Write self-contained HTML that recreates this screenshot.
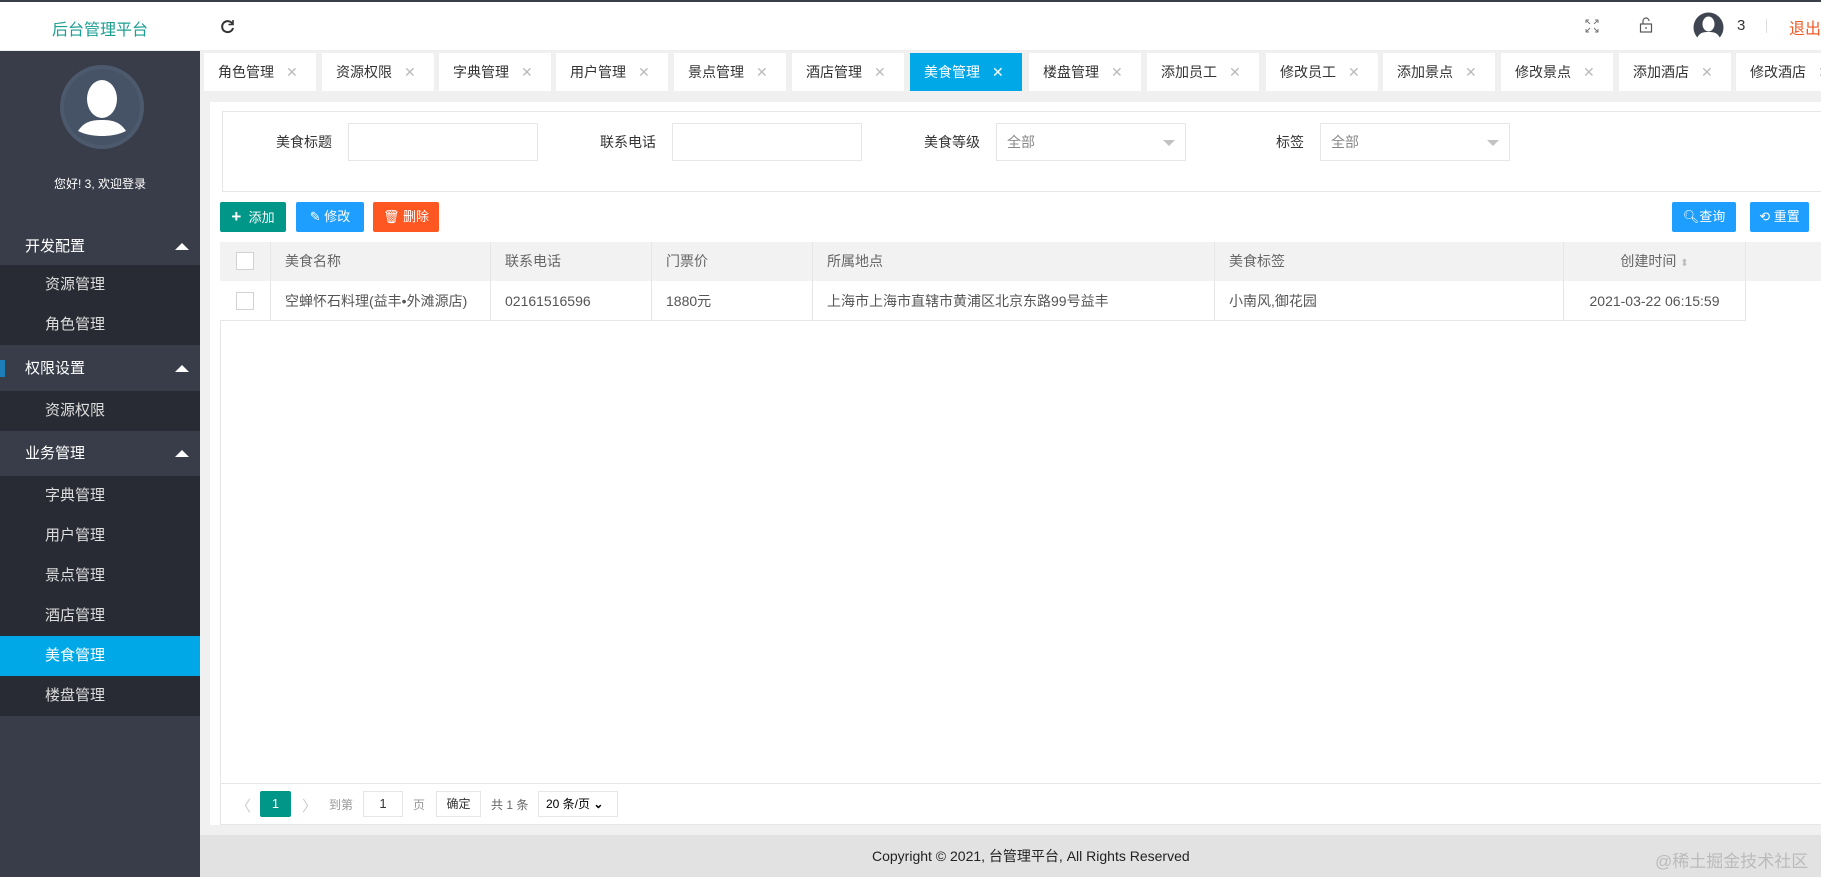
<!DOCTYPE html>
<html><head><meta charset="utf-8"><style>
*{margin:0;padding:0;box-sizing:border-box}
body{width:1821px;height:877px;overflow:hidden;font-family:"Liberation Sans","Noto Sans CJK SC",sans-serif;font-size:14px;color:#333;background:#f0f0f0;position:relative}
.abs{position:absolute}
#hdr{left:0;top:0;width:1821px;height:51px;background:#fff;border-top:2px solid #3a3f4a;border-bottom:1px solid #eee}
#side{left:0;top:51px;width:200px;height:826px;background:#393d49}
.grp{position:absolute;left:0;width:200px;height:45px;background:#393d49;color:#fff;font-size:15px;line-height:45px;padding-left:25px}
.grp:after{content:"";position:absolute;right:11px;top:19px;border-left:7px solid transparent;border-right:7px solid transparent;border-bottom:7px solid #fff}
.it{position:absolute;left:0;width:200px;height:40px;background:#282b33;color:#ddd;font-size:15px;line-height:40px;padding-left:45px}
.tab{position:absolute;top:53px;height:38px;width:112px;background:#fff;font-size:14px;line-height:38px;padding-left:14px;color:#333}
.tab span{color:#bbb;margin-left:12px;font-size:14px}
.lbl{position:absolute;top:132px;font-size:14px;color:#333}
.inp{position:absolute;top:123px;height:38px;width:190px;border:1px solid #e6e6e6;background:#fff;font-size:14px;color:#888;line-height:36px;padding-left:10px}
.sel:after{content:"";position:absolute;right:10px;top:16px;border-left:6px solid transparent;border-right:6px solid transparent;border-top:6px solid #c2c2c2}
.btn{position:absolute;top:202px;height:30px;color:#fff;font-size:13px;line-height:30px;text-align:center;border-radius:2px}
.th,.td{position:absolute;font-size:14px;padding-left:14px;border-right:1px solid #e6e6e6}
.th{top:242px;height:39px;line-height:39px;color:#666;background:#f2f2f2}
.td{top:281px;height:40px;line-height:40px;color:#555;background:#fff;border-bottom:1px solid #e6e6e6}
.cb{position:absolute;width:18px;height:18px;border:1px solid #d2d2d2;background:#fff;left:236px}
</style></head><body>
<div id="hdr" class="abs">
 <div class="abs" style="left:52px;top:14px;font-size:16px;color:#1a9e92">后台管理平台</div>
 <svg class="abs" style="left:220px;top:17px" width="15" height="15" viewBox="0 0 15 15" fill="none" stroke="#333" stroke-width="2"><path d="M12.5 5A5.5 5.5 0 1 0 13 9"/><path d="M13 1v4.5H8.5" stroke-width="1.6"/></svg>
 <svg class="abs" style="left:1585px;top:17px" width="14" height="14" viewBox="0 0 14 14" fill="none" stroke="#777" stroke-width="1"><path d="M1 4V1h3M10 1h3v3M13 10v3h-3M4 13H1v-3M1 1l4 4M13 1 9 5M13 13 9 9M1 13l4-4"/></svg>
 <svg class="abs" style="left:1639px;top:15px" width="14" height="16" viewBox="0 0 14 16" fill="none" stroke="#555" stroke-width="1.2"><path d="M4 7V4a3 3 0 0 1 6 0"/><rect x="1.5" y="7" width="11" height="8"/><path d="M7 10v2"/></svg>
 <svg class="abs" style="left:1693px;top:10px" width="31" height="31" viewBox="0 0 31 31"><circle cx="15.5" cy="15.5" r="15" fill="#3f4651"/><ellipse cx="15.5" cy="12" rx="6" ry="7.5" fill="#fff"/><path d="M4 26c3-6 7-6 11.5-6s8.5 0 11.5 6a14 14 0 0 1-23 0z" fill="#fff"/></svg>
 <div class="abs" style="left:1737px;top:15px;font-size:15px;color:#333">3</div>
 <div class="abs" style="left:1766px;top:17px;width:1px;height:14px;background:#ddd"></div>
 <div class="abs" style="left:1789px;top:13px;font-size:16px;color:#f05a28">退出</div>
</div>
<div id="side" class="abs">
 <svg class="abs" style="left:60px;top:14px" width="84" height="84" viewBox="0 0 84 84"><circle cx="42" cy="42" r="42" fill="#4d5a6e"/><circle cx="42" cy="42" r="38" fill="#465265"/><ellipse cx="42" cy="34" rx="15" ry="19" fill="#fff"/><path d="M18 66c6-9 13-11 24-11s18 2 24 11c-8 4-17 5-24 5s-16-1-24-5z" fill="#fff"/></svg>
 <div class="abs" style="left:0;width:200px;top:124px;text-align:center;color:#fff;font-size:12px">您好! 3, 欢迎登录</div>
</div>
<div class="grp" style="top:224px">开发配置</div>
<div class="it" style="top:265px">资源管理</div>
<div class="it" style="top:305px">角色管理</div>
<div class="grp" style="top:346px"><span class="abs" style="left:0;top:14px;width:5px;height:17px;background:#1e7fb8"></span>权限设置</div>
<div class="it" style="top:391px">资源权限</div>
<div class="grp" style="top:431px">业务管理</div>
<div class="it" style="top:476px">字典管理</div>
<div class="it" style="top:516px">用户管理</div>
<div class="it" style="top:556px">景点管理</div>
<div class="it" style="top:596px">酒店管理</div>
<div class="it" style="top:636px;background:#00a8e8;color:#fff">美食管理</div>
<div class="it" style="top:676px">楼盘管理</div>

<div class="tab" style="left:204px">角色管理<span>✕</span></div>
<div class="tab" style="left:322px">资源权限<span>✕</span></div>
<div class="tab" style="left:439px">字典管理<span>✕</span></div>
<div class="tab" style="left:556px">用户管理<span>✕</span></div>
<div class="tab" style="left:674px">景点管理<span>✕</span></div>
<div class="tab" style="left:792px">酒店管理<span>✕</span></div>
<div class="tab" style="left:910px;background:#00a8e8;color:#fff">美食管理<span style="color:#fff">✕</span></div>
<div class="tab" style="left:1029px">楼盘管理<span>✕</span></div>
<div class="tab" style="left:1147px">添加员工<span>✕</span></div>
<div class="tab" style="left:1266px">修改员工<span>✕</span></div>
<div class="tab" style="left:1383px">添加景点<span>✕</span></div>
<div class="tab" style="left:1501px">修改景点<span>✕</span></div>
<div class="tab" style="left:1619px">添加酒店<span>✕</span></div>
<div class="tab" style="left:1736px">修改酒店<span>✕</span></div>

<div class="abs" style="left:210px;top:102px;width:1611px;height:723px;background:#fff"></div>
<div class="abs" style="left:222px;top:111px;width:1599px;height:81px;border:1px solid #e6e6e6;border-right:none"></div>
<div class="lbl" style="left:276px">美食标题</div><div class="inp" style="left:348px"></div>
<div class="lbl" style="left:600px">联系电话</div><div class="inp" style="left:672px"></div>
<div class="lbl" style="left:924px">美食等级</div><div class="inp sel" style="left:996px">全部</div>
<div class="lbl" style="left:1276px">标签</div><div class="inp sel" style="left:1320px">全部</div>

<div class="btn" style="left:220px;width:66px;background:#009688"><b style="font-size:17px">+</b>&nbsp; 添加</div>
<div class="btn" style="left:296px;width:68px;background:#1e9fff">✎ 修改</div>
<div class="btn" style="left:373px;width:66px;background:#ff5722">🗑 删除</div>
<div class="btn" style="left:1672px;width:64px;background:#1e9fff">&#x1F50D;&#xFE0E;查询</div>
<div class="btn" style="left:1750px;width:59px;background:#1e9fff">⟲ 重置</div>

<div class="abs" style="left:220px;top:242px;width:1601px;height:583px;border:1px solid #e6e6e6;border-right:none"></div>
<div class="th" style="left:220px;width:51px"></div>
<div class="th" style="left:271px;width:220px">美食名称</div>
<div class="th" style="left:491px;width:161px">联系电话</div>
<div class="th" style="left:652px;width:161px">门票价</div>
<div class="th" style="left:813px;width:402px">所属地点</div>
<div class="th" style="left:1215px;width:349px">美食标签</div>
<div class="th" style="left:1564px;width:182px;text-align:center;padding:0">创建时间 <span style="color:#bbb;font-size:10px">⬍</span></div>
<div class="th" style="left:1746px;width:75px;border:none"></div>
<div class="td" style="left:220px;width:51px"></div>
<div class="td" style="left:271px;width:220px">空蝉怀石料理(益丰•外滩源店)</div>
<div class="td" style="left:491px;width:161px">02161516596</div>
<div class="td" style="left:652px;width:161px">1880元</div>
<div class="td" style="left:813px;width:402px">上海市上海市直辖市黄浦区北京东路99号益丰</div>
<div class="td" style="left:1215px;width:349px">小南风,御花园</div>
<div class="td" style="left:1564px;width:182px;text-align:center;padding:0">2021-03-22 06:15:59</div>
<div class="cb" style="top:252px"></div><div class="cb" style="top:292px"></div>

<div class="abs" style="left:221px;top:783px;width:1600px;height:1px;background:#e6e6e6"></div>
<div class="abs" style="left:236px;top:795px;color:#ccc;font-size:15px">〈</div>
<div class="abs" style="left:260px;top:791px;width:31px;height:26px;background:#009688;color:#fff;text-align:center;line-height:26px;font-size:13px;border-radius:2px">1</div>
<div class="abs" style="left:302px;top:795px;color:#ccc;font-size:15px">〉</div>
<div class="abs" style="left:329px;top:796px;color:#999;font-size:12px">到第</div>
<div class="abs" style="left:363px;top:791px;width:40px;height:26px;border:1px solid #e6e6e6;text-align:center;line-height:24px;font-size:13px">1</div>
<div class="abs" style="left:413px;top:796px;color:#999;font-size:12px">页</div>
<div class="abs" style="left:436px;top:791px;width:45px;height:26px;border:1px solid #e6e6e6;text-align:center;line-height:24px;font-size:12px;color:#333">确定</div>
<div class="abs" style="left:491px;top:796px;color:#666;font-size:12px">共 1 条</div>
<div class="abs" style="left:538px;top:791px;width:80px;height:26px;border:1px solid #e6e6e6;line-height:24px;font-size:12px;padding-left:7px;color:#000">20 条/页 <b>⌄</b></div>

<div class="abs" style="left:200px;top:835px;width:1621px;height:42px;background:#e2e2e2;line-height:42px;font-size:14px;color:#222"><span class="abs" style="left:672px;top:0;white-space:nowrap">Copyright © 2021, 台管理平台, All Rights Reserved</span></div>
<div class="abs" style="left:1655px;top:847px;font-size:17px;color:#bbb">@稀土掘金技术社区</div>
</body></html>
